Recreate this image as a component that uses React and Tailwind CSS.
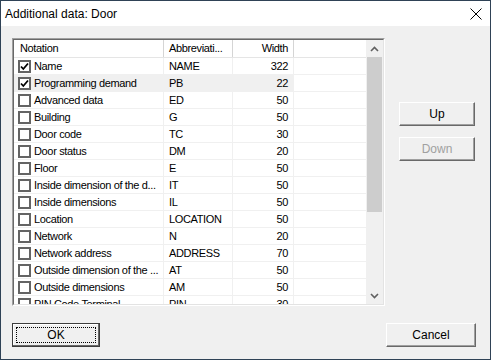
const rows = [
  ["Name", "NAME", "322", true],
  ["Programming demand", "PB", "22", true],
  ["Advanced data", "ED", "50"],
  ["Building", "G", "50"],
  ["Door code", "TC", "30"],
  ["Door status", "DM", "20"],
  ["Floor", "E", "50"],
  ["Inside dimension of the d...", "IT", "50"],
  ["Inside dimensions", "IL", "50"],
  ["Location", "LOCATION", "50"],
  ["Network", "N", "20"],
  ["Network address", "ADDRESS", "70"],
  ["Outside dimension of the ...", "AT", "50"],
  ["Outside dimensions", "AM", "50"],
  ["PIN Code Terminal", "PIN", "30"],
];

function CheckBox({ checked }) {
  return (
    <div className="w-[13px] h-[13px] shrink-0 border-2 border-[#646464] bg-white flex items-center justify-center">
      {checked && (
        <svg width="9" height="9" viewBox="0 0 9 9">
          <path d="M1 4.5 L3.3 7 L8 1.5" fill="none" stroke="#000" strokeWidth="1.8" />
        </svg>
      )}
    </div>
  );
}

function Button({ children, disabled, primary, className = "" }) {
  if (primary) {
    return (
      <div className={`h-[24px] border border-[#3c3c3c] bg-[#f0f0f0] shadow-[inset_-1px_-1px_0_#696969,inset_1px_1px_0_#fff] p-[3px] ${className}`}>
        <div className="h-full border border-dotted border-black flex items-center justify-center text-[12px] leading-none">
          {children}
        </div>
      </div>
    );
  }
  return (
    <div
      className={`h-[24px] border border-t-white border-l-white border-b-[#696969] border-r-[#696969] bg-[#f0f0f0] shadow-[inset_-1px_-1px_0_#a0a0a0] flex items-center justify-center text-[12px] ${disabled ? "text-[#a0a0a0]" : "text-black"} ${className}`}
    >
      {children}
    </div>
  );
}

export default function App() {
  return (
    <div className="w-[491px] h-[360px] border border-[#2f4256] bg-[#f0f0f0] flex flex-col font-['Liberation_Sans',Arial,sans-serif] text-black select-none">
      <div className="h-[25px] bg-white flex items-center justify-between pl-[4px] pr-[8px] shrink-0">
        <span className="text-[12px]">Additional data: Door</span>
        <svg width="12" height="12" viewBox="0 0 12 12">
          <path d="M0.5 0.5 L11.5 11.5 M11.5 0.5 L0.5 11.5" stroke="#000" strokeWidth="1" />
        </svg>
      </div>

      <div className="flex-1 pl-[11px] pr-[14px] pt-[12px] flex flex-col">
        <div className="flex">
          <div className="w-[373px] h-[268px] border border-t-[#a0a0a0] border-l-[#a0a0a0] border-b-white border-r-white">
            <div className="w-full h-full border border-t-[#696969] border-l-[#696969] border-b-[#e3e3e3] border-r-[#e3e3e3] bg-white flex overflow-hidden">
              <div className="flex-1 flex flex-col text-[11px] tracking-[-0.35px] overflow-hidden">
                <div className="h-[18px] shrink-0 flex border-b border-[#e5e5e5]">
                  <div className="w-[150px] pl-[6px] border-r border-[#d5d5d5] flex items-center">Notation</div>
                  <div className="w-[69px] pl-[5px] border-r border-[#d5d5d5] flex items-center">Abbreviati...</div>
                  <div className="w-[61px] pr-[5px] border-r border-[#d5d5d5] flex items-center justify-end">Width</div>
                  <div className="flex-1" />
                </div>
                {rows.map(([name, abbr, width, checked], i) => (
                  <div key={name} className="h-[17px] shrink-0 flex border-b border-[#f0f0f0]">
                    <div className={`flex ${i === 1 ? "bg-[#f0f0f0]" : ""}`}>
                      <div className="w-[150px] pl-[4px] border-r border-[#f0f0f0] flex items-center gap-[3px] whitespace-nowrap overflow-hidden">
                        <CheckBox checked={checked} />
                        <span className="pt-[1px]">{name}</span>
                      </div>
                      <div className="w-[69px] pl-[5px] pt-[1px] border-r border-[#f0f0f0] flex items-center">{abbr}</div>
                      <div className="w-[61px] pr-[5px] pt-[1px] border-r border-[#f0f0f0] flex items-center justify-end">{width}</div>
                    </div>
                    <div className="flex-1" />
                  </div>
                ))}
              </div>

              <div className="w-[17px] shrink-0 bg-[#f0f0f0] flex flex-col">
                <div className="h-[17px] flex items-center justify-center">
                  <svg width="9" height="6" viewBox="0 0 9 6">
                    <path d="M1 5 L4.5 1.5 L8 5" fill="none" stroke="#606060" strokeWidth="1.6" />
                  </svg>
                </div>
                <div className="h-[155px] mx-[1px] bg-[#cdcdcd]" />
                <div className="flex-1" />
                <div className="h-[17px] flex items-center justify-center">
                  <svg width="9" height="6" viewBox="0 0 9 6">
                    <path d="M1 1 L4.5 4.5 L8 1" fill="none" stroke="#606060" strokeWidth="1.6" />
                  </svg>
                </div>
              </div>
            </div>
          </div>

          <div className="ml-[14px] w-[76px] pt-[64px] flex flex-col gap-[11px]">
            <Button>Up</Button>
            <Button disabled>Down</Button>
          </div>
        </div>

        <div className="mt-[17px] flex justify-between">
          <Button primary className="w-[88px]">OK</Button>
          <Button className="w-[90px]">Cancel</Button>
        </div>
      </div>
    </div>
  );
}
